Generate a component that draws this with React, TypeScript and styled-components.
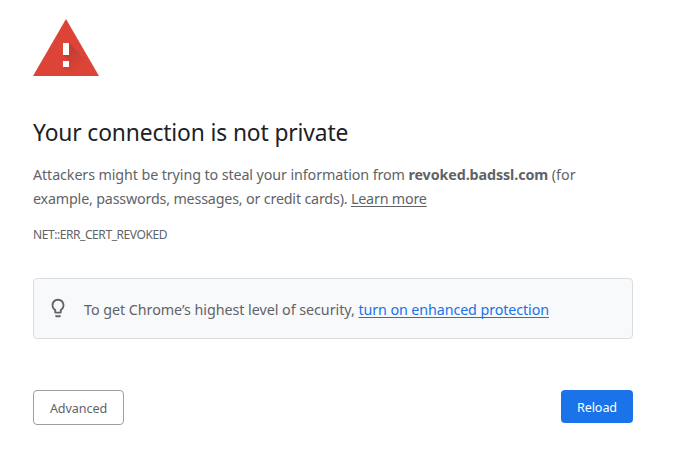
import React from 'react';
import styled, { createGlobalStyle } from 'styled-components';

const GlobalStyle = createGlobalStyle`
  * { box-sizing: border-box; }
  body {
    margin: 0;
    background: #fff;
    color: #5f6368;
    font-family: "Noto Sans", "Open Sans", sans-serif;
    font-size: 14.3px;
    line-height: 24px;
  }
`;

const Page = styled.main`
  width: 600px;
  margin: 19px 0 0 33px;
  white-space: nowrap;
`;

const WarningIcon = styled.svg`
  display: block;
  width: 66px;
  height: 57px;
`;

const Title = styled.h1`
  margin: 42px 0 16px;
  color: #202124;
  font-size: 22.8px;
  font-weight: 400;
  line-height: 29px;
  letter-spacing: -0.13px;
`;

const Message = styled.p`
  margin: 0;
`;

const Run = styled.span<{ $spacing?: number }>`
  letter-spacing: ${({ $spacing = 0 }) => $spacing}px;
`;

const Host = styled.strong<{ $spacing?: number }>`
  font-weight: 700;
  letter-spacing: ${({ $spacing = 0 }) => $spacing}px;
`;

const Link = styled.a<{ $color: string; $spacing?: number }>`
  color: ${({ $color }) => $color};
  letter-spacing: ${({ $spacing = 0 }) => $spacing}px;
  text-decoration: underline;
  text-decoration-thickness: 1px;
  text-underline-offset: 2px;
  text-decoration-skip-ink: none;
`;

const ErrorCode = styled.div`
  margin-top: 14px;
  font-size: 12px;
  line-height: 20px;
  letter-spacing: -0.43px;
`;

const Tip = styled.section`
  display: flex;
  align-items: center;
  height: 61px;
  margin-top: 33px;
  padding: 2px 16px 0 14px;
  border: 1px solid #dadce0;
  border-radius: 4px;
  background: #f8f9fa;
`;

const Bulb = styled.svg`
  width: 22px;
  height: 22px;
  margin: -4px 15px 0 -1px;
  fill: #5f6368;
`;

const Actions = styled.div`
  display: flex;
  align-items: flex-start;
  justify-content: space-between;
  margin-top: 51px;
`;

const Button = styled.button<{ $primary?: boolean }>`
  width: ${({ $primary }) => ($primary ? 72 : 91)}px;
  height: ${({ $primary }) => ($primary ? 33 : 35)}px;
  padding: 2px 0 0;
  border: ${({ $primary }) => ($primary ? '0' : '1px solid #9aa0a6')};
  border-radius: 4px;
  background: ${({ $primary }) => ($primary ? '#1a73e8' : '#fff')};
  color: ${({ $primary }) => ($primary ? '#fff' : '#5f6368')};
  font-family: inherit;
  font-size: 12.6px;
  line-height: 20px;
  letter-spacing: -0.1px;
`;

export default function App() {
  return (
    <>
      <GlobalStyle />
      <Page>
        <WarningIcon viewBox="0 0 66 57" aria-hidden="true">
          <defs>
            <linearGradient id="shade" gradientUnits="userSpaceOnUse" x1="33" y1="27" x2="50" y2="44">
              <stop offset="0" stopColor="#9f3029" stopOpacity="0.5" />
              <stop offset="1" stopColor="#9f3029" stopOpacity="0" />
            </linearGradient>
            <clipPath id="triangle"><path d="M33 0 66 57H0z" /></clipPath>
          </defs>
          <path d="M33 0 66 57H0z" fill="#db4437" />
          <g clipPath="url(#triangle)" fill="url(#shade)">
            <path d="M36 24 69 57H51L30 36z" />
            <path d="M36 42 51 57H39L30 48z" />
          </g>
          <path d="M30 24h6v12h-6zM30 42h6v6h-6z" fill="#fff" />
        </WarningIcon>
        <Title>Your connection is not private</Title>
        <Message>
          <Run $spacing={-0.1}>Attackers might be trying to steal your information from </Run>
          <Host $spacing={-0.1}>revoked.badssl.com</Host>
          <Run> (for</Run>
          <br />
          <Run $spacing={-0.18}>example, passwords, messages, or credit cards). </Run>
          <Link $color="#5f6368" $spacing={-0.2}>Learn more</Link>
        </Message>
        <ErrorCode>NET::ERR_CERT_REVOKED</ErrorCode>
        <Tip>
          <Bulb viewBox="0 0 24 24" aria-hidden="true">
            <path d="M9 21c0 .5.4 1 1 1h4c.6 0 1-.5 1-1v-1H9v1zm3-19C8.1 2 5 5.1 5 9c0 2.4 1.2 4.5 3 5.7V17c0 .5.4 1 1 1h6c.6 0 1-.5 1-1v-2.3c1.8-1.3 3-3.4 3-5.7 0-3.9-3.1-7-7-7zm2.9 11.1-.9.6V16h-4v-2.3l-.9-.6C7.8 12.2 7 10.6 7 9c0-2.8 2.2-5 5-5s5 2.2 5 5c0 1.6-.8 3.2-2.1 4.1z" />
          </Bulb>
          <Message>
            <Run $spacing={-0.04}>To get Chrome’s highest level of security, </Run>
            <Link $color="#1a73e8" $spacing={-0.1}>turn on enhanced protection</Link>
          </Message>
        </Tip>
        <Actions>
          <Button>Advanced</Button>
          <Button $primary>Reload</Button>
        </Actions>
      </Page>
    </>
  );
}
